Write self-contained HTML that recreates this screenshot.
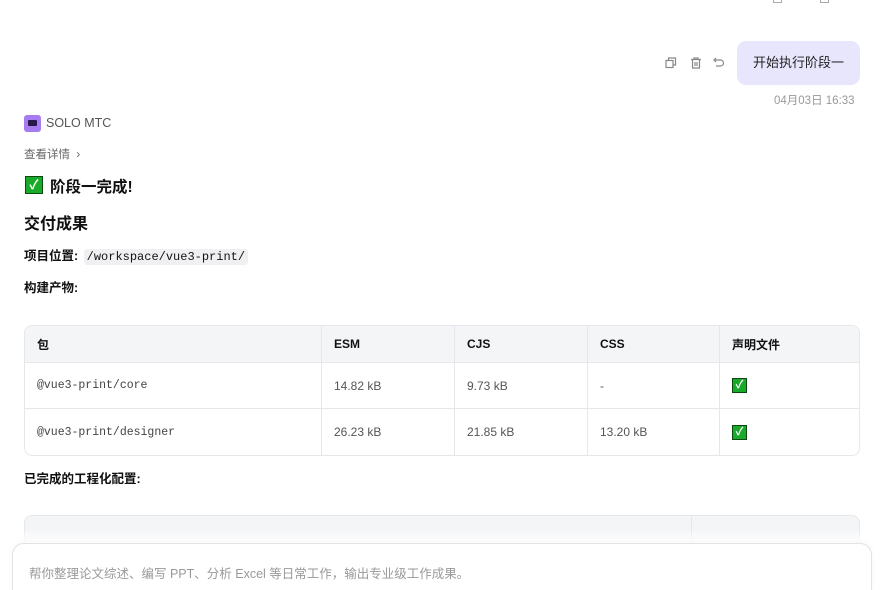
<!DOCTYPE html>
<html><head><meta charset="utf-8"><style>
*{box-sizing:border-box;margin:0;padding:0}
html,body{width:881px;height:590px;overflow:hidden}
body{background:#fff;font-family:"Liberation Sans","Noto Sans CJK SC",sans-serif;color:#1f1f1f;position:relative}
.a{position:absolute}
table{position:absolute;left:24px;top:325px;width:836px;border-collapse:separate;border-spacing:0;border:1px solid #e5e7eb;border-radius:8px;overflow:hidden;font-size:12px}
td,th{border-right:1px solid #e5e7eb;border-bottom:1px solid #e5e7eb;padding:0 12px;text-align:left}
th{background:#f4f5f7;height:37px;font-weight:bold;color:#111}
td{height:46px;color:#555}
tr:last-child td{border-bottom:none}
td:last-child,th:last-child{border-right:none}
.mono{font-family:"Liberation Mono",monospace;font-size:11.5px;color:#444}
.ck{display:inline-block;width:15px;height:15px;background:#1aaa2a;border:1px solid #0a4a10;color:#fff;font-size:11px;line-height:13px;text-align:center;font-weight:bold;vertical-align:middle}
</style></head><body>
<div class="a" style="left:773px;top:-6px;width:9px;height:9px;border:1.3px solid #aaa"></div>
<div class="a" style="left:820px;top:-6px;width:9px;height:9px;border:1.3px solid #aaa"></div>
<svg class="a" style="left:664px;top:56px" width="14" height="14" viewBox="0 0 14 14" fill="none" stroke="#888" stroke-width="1.2"><rect x="2" y="4.5" width="7" height="7"/><path d="M4.5 4.5V2h7v7H9"/></svg>
<svg class="a" style="left:689px;top:56px" width="14" height="14" viewBox="0 0 14 14" fill="none" stroke="#888" stroke-width="1.2"><path d="M2 3.5h10M5 3.5V2h4v1.5M3.5 3.5v8.5h7V3.5M6 6v4M8 6v4"/></svg>
<svg class="a" style="left:712px;top:56px" width="14" height="14" viewBox="0 0 14 14" fill="none" stroke="#888" stroke-width="1.2"><path d="M4 2L2 4l2 2M2 4h6.5a3 3 0 010 6H4"/></svg>
<div class="a" style="left:737px;top:41px;width:123px;height:44px;background:#e8e6fd;border-radius:9px;font-size:13px;line-height:44px;text-align:center;color:#222">开始执行阶段一</div>
<div class="a" style="left:774px;top:92px;font-size:11.5px;color:#999">04月03日 16:33</div>
<div class="a" style="left:24px;top:115px;width:17px;height:17px;background:#a67cf0;border-radius:3px"><div style="position:absolute;left:4px;top:5px;width:9px;height:6px;background:#2a1a4a;border-radius:1px"></div></div>
<div class="a" style="left:46px;top:116px;font-size:12.5px;color:#555">SOLO MTC</div>
<div class="a" style="left:24px;top:146px;font-size:11.5px;color:#666">查看详情 &nbsp;›</div>
<div class="a" style="left:25px;top:176px;width:18px;height:18px;background:#1aaa2a;border:1.5px solid #0a4a10;color:#fff;font-size:13px;line-height:15px;text-align:center;font-weight:bold">✓</div>
<div class="a" style="left:50px;top:175px;font-size:15.5px;font-weight:bold;color:#111">阶段一完成!</div>
<div class="a" style="left:24px;top:210px;font-size:16px;font-weight:bold;color:#111">交付成果</div>
<div class="a" style="left:24px;top:245px;font-size:12.5px;font-weight:bold;color:#111">项目位置: <span style="font-family:'Liberation Mono',monospace;font-weight:normal;font-size:12px;background:#f0f0f2;border-radius:3px;padding:1px 3px;margin-left:2px">/workspace/vue3-print/</span></div>
<div class="a" style="left:24px;top:277px;font-size:12.5px;font-weight:bold;color:#111">构建产物:</div>
<table>
<tr><th style="width:297px">包</th><th style="width:133px">ESM</th><th style="width:133px">CJS</th><th style="width:132px">CSS</th><th>声明文件</th></tr>
<tr><td class="mono">@vue3-print/core</td><td>14.82 kB</td><td>9.73 kB</td><td>-</td><td><span class="ck">✓</span></td></tr>
<tr><td class="mono">@vue3-print/designer</td><td>26.23 kB</td><td>21.85 kB</td><td>13.20 kB</td><td><span class="ck">✓</span></td></tr>
</table>
<div class="a" style="left:24px;top:468px;font-size:12.5px;font-weight:bold;color:#111">已完成的工程化配置:</div>
<div class="a" style="left:24px;top:515px;width:836px;height:40px;background:#f4f5f7;border:1px solid #e5e7eb;border-radius:8px 8px 0 0"><div style="position:absolute;left:666px;top:0;width:1px;height:40px;background:#e5e7eb"></div></div>
<div class="a" style="left:0;top:530px;width:881px;height:60px;background:linear-gradient(rgba(255,255,255,0),#fff 20%)"></div>
<div class="a" style="left:12px;top:543px;width:860px;height:60px;background:#fff;border:1px solid #e2e2e8;border-radius:12px;box-shadow:0 -2px 6px rgba(0,0,0,0.03)"></div>
<div class="a" style="left:29px;top:563px;font-size:12.5px;color:#999">帮你整理论文综述、编写 PPT、分析 Excel 等日常工作，输出专业级工作成果。</div>
</body></html>
